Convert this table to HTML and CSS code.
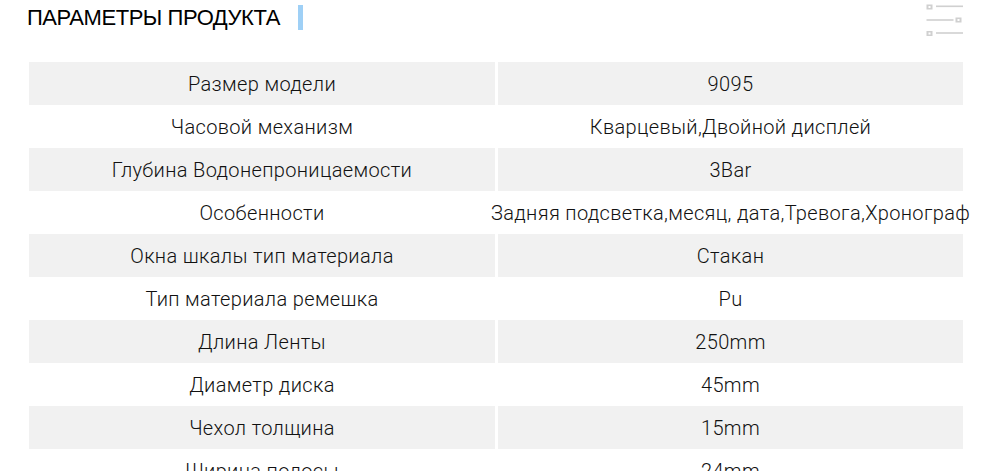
FILE: index.html
```html
<!DOCTYPE html>
<html lang="ru">
<head>
<meta charset="utf-8">
<link rel="stylesheet" href="styles.css">
</head>
<body>
<div class="page">
  <header class="head">
    <h1 class="title">ПАРАМЕТРЫ ПРОДУКТА</h1>
    <span class="bar"></span>
    <svg class="menu" width="38" height="38" viewBox="0 0 38 38">
      <rect x="0.5" y="4.5" width="6" height="5" fill="#d0d0d0"/>
      <rect x="2.5" y="6" width="2" height="2" fill="#fff"/>
      <rect x="10" y="5.5" width="27" height="1.6" fill="#d0d0d0"/>
      <rect x="0.5" y="19.2" width="27" height="1.6" fill="#d0d0d0"/>
      <rect x="29.5" y="17.5" width="6" height="5" fill="#d0d0d0"/>
      <rect x="31.5" y="19" width="2" height="2" fill="#fff"/>
      <rect x="0.5" y="31" width="6" height="5" fill="#d0d0d0"/>
      <rect x="2.5" y="32.5" width="2" height="2" fill="#fff"/>
      <rect x="10" y="32.2" width="27" height="1.6" fill="#d0d0d0"/>
    </svg>
  </header>
  <div class="spec">
    <div class="row"><div class="cell">Размер модели</div><div class="cell">9095</div></div>
    <div class="row"><div class="cell">Часовой механизм</div><div class="cell">Кварцевый,Двойной дисплей</div></div>
    <div class="row"><div class="cell">Глубина Водонепроницаемости</div><div class="cell">3Bar</div></div>
    <div class="row"><div class="cell">Особенности</div><div class="cell">Задняя подсветка,месяц, дата,Тревога,Хронограф</div></div>
    <div class="row"><div class="cell">Окна шкалы тип материала</div><div class="cell">Стакан</div></div>
    <div class="row"><div class="cell">Тип материала ремешка</div><div class="cell">Pu</div></div>
    <div class="row"><div class="cell">Длина Ленты</div><div class="cell">250mm</div></div>
    <div class="row"><div class="cell">Диаметр диска</div><div class="cell">45mm</div></div>
    <div class="row"><div class="cell">Чехол толщина</div><div class="cell">15mm</div></div>
    <div class="row"><div class="cell">Ширина полосы</div><div class="cell">24mm</div></div>
  </div>
</div>
</body>
</html>
```
FILE: styles.css
```css
html, body {
  margin: 0;
  padding: 0;
  background: #fff;
  overflow: hidden;
}
.page {
  width: 990px;
  height: 471px;
  overflow: hidden;
  font-family: "Liberation Sans", Arial, sans-serif;
  color: #111;
}
.head {
  height: 62px;
  display: flex;
  align-items: flex-start;
  padding-left: 27px;
  padding-right: 26px;
  box-sizing: border-box;
}
.title {
  margin: 5px 0 0 0;
  font-size: 22px;
  font-weight: normal;
  letter-spacing: -0.45px;
  line-height: 25px;
  color: #000;
}
.bar {
  width: 5px;
  height: 25px;
  background: #9fd0f6;
  margin: 5px 0 0 18px;
}
.menu {
  margin-left: auto;
  margin-top: 0;
}
.spec {
  margin-left: 29px;
  width: 934px;
  display: flex;
  flex-direction: column;
}
.row {
  display: grid;
  grid-template-columns: 466px 465px;
  column-gap: 3px;
  height: 43px;
}
.row:nth-child(odd) .cell {
  background: #f1f1f1;
}
.cell {
  display: flex;
  align-items: center;
  justify-content: center;
  font-family: Roboto, "Liberation Sans", sans-serif;
  font-weight: 300;
  font-size: 20px;
  letter-spacing: 0.35px;
  white-space: nowrap;
  color: #111;
}
```
